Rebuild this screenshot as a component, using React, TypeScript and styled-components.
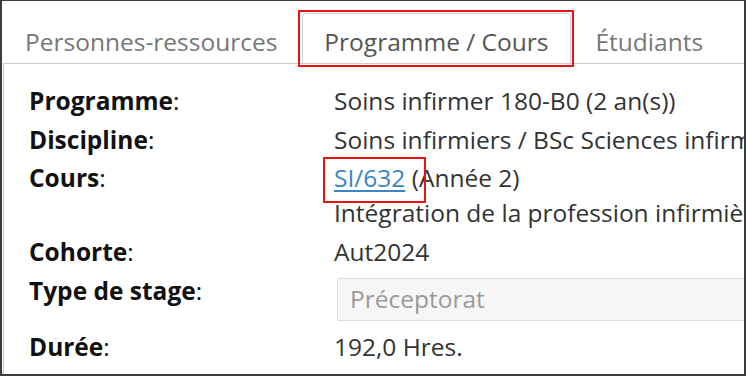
import React from 'react'
import styled, { createGlobalStyle } from 'styled-components'

const GlobalStyle = createGlobalStyle`
  html, body {
    margin: 0;
    padding: 0;
    background: #fff;
  }
  body {
    font-family: 'Open Sans', 'Noto Sans', Arial, sans-serif;
  }
`

const Frame = styled.div`
  position: relative;
  box-sizing: border-box;
  width: 746px;
  height: 376px;
  overflow: hidden;
  border: 2px solid #3c3c3c;
  border-top-width: 1px;
  padding-left: 1px;
  background: #fff;
  font-size: 24.5px;
`

const TabList = styled.ul`
  display: flex;
  margin: 12px 0 0;
  padding: 0;
  list-style: none;
  border-bottom: 1px solid #cbcbcb;
  white-space: nowrap;
`

const Tab = styled.li<{ active?: boolean }>`
  padding: 10px 21px 4px;
  margin-right: 3px;
  line-height: 35px;
  border: 1px solid transparent;
  border-bottom: none;
  border-radius: 4px 4px 0 0;
  color: ${({ active }) => (active ? '#555' : '#777')};
  border-color: ${({ active }) => (active ? '#d2d2d2' : 'transparent')};
  background: #fff;
`

const Panel = styled.div`
  border-left: 1px solid #cbcbcb;
  padding: 19px 0 0 25px;
  height: 400px;
`

const Row = styled.div<{ gap?: number }>`
  display: grid;
  grid-template-columns: 305px 1fr;
  margin-bottom: ${({ gap }) => gap ?? 4}px;
  line-height: 35px;
`

const Label = styled.div`
  color: #111;
  white-space: nowrap;

  strong {
    font-weight: 700;
  }
`

const Value = styled.div`
  color: #333;
  white-space: nowrap;
`

const Link = styled.a`
  color: #3a86c8;
  text-decoration: underline;
  text-underline-offset: 3px;
`

const SelectBox = styled.div`
  box-sizing: border-box;
  width: 430px;
  height: 43px;
  margin: 5px 0 0 3px;
  padding: 0 12px;
  line-height: 40px;
  border: 1px solid #dcdcdc;
  border-radius: 2px;
  background: #f6f6f6;
  color: #9a9a9a;
`

const RedBox = styled.div`
  position: absolute;
  box-sizing: border-box;
  border: 2px solid #e81212;
  pointer-events: none;
`

const fields = [
  { label: 'Programme', value: 'Soins infirmer 180-B0 (2 an(s))', gap: 4 },
  { label: 'Discipline', value: 'Soins infirmiers / BSc Sciences infirmières', gap: 3 },
]

export default function App() {
  return (
    <>
      <GlobalStyle />
      <Frame>
        <TabList>
          <Tab>Personnes-ressources</Tab>
          <Tab active>Programme / Cours</Tab>
          <Tab>Étudiants</Tab>
        </TabList>
        <Panel>
          {fields.map((f) => (
            <Row key={f.label} gap={f.gap}>
              <Label>
                <strong>{f.label}</strong>:
              </Label>
              <Value>{f.value}</Value>
            </Row>
          ))}
          <Row gap={4}>
            <Label>
              <strong>Cours</strong>:
            </Label>
            <Value>
              <div>
                <Link href="#">SI/632</Link> (Année 2)
              </div>
              <div>Intégration de la profession infirmière</div>
            </Value>
          </Row>
          <Row>
            <Label>
              <strong>Cohorte</strong>:
            </Label>
            <Value>Aut2024</Value>
          </Row>
          <Row gap={8}>
            <Label>
              <strong>Type de stage</strong>:
            </Label>
            <SelectBox>Préceptorat</SelectBox>
          </Row>
          <Row>
            <Label>
              <strong>Durée</strong>:
            </Label>
            <Value>192,0 Hres.</Value>
          </Row>
        </Panel>
        <RedBox style={{ left: 296, top: 9, width: 276, height: 57 }} />
        <RedBox style={{ left: 321, top: 156, width: 103, height: 46 }} />
      </Frame>
    </>
  )
}
